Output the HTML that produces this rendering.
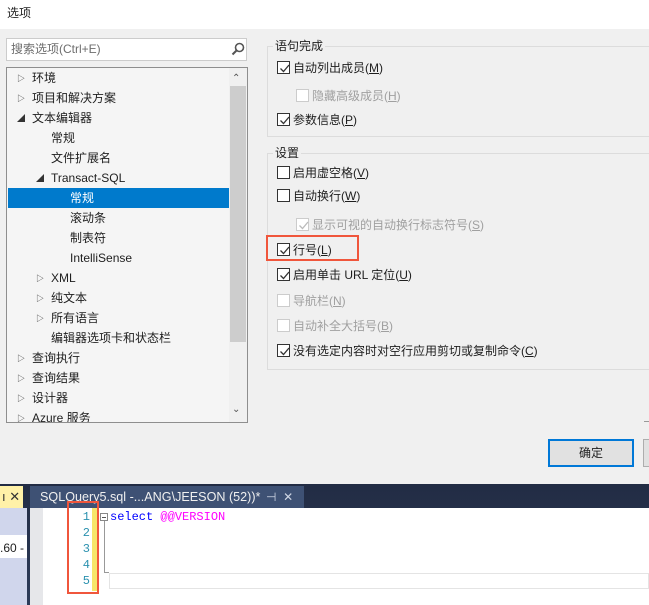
<!DOCTYPE html>
<html><head><meta charset="utf-8"><style>
*{margin:0;padding:0;box-sizing:border-box}
body{width:649px;height:605px;overflow:hidden;position:relative;background:#f0f0f0;font-family:"Liberation Sans","Noto Sans CJK SC",sans-serif;font-size:12px;color:#1e1e1e}
.a{position:absolute}
.t{position:absolute;white-space:nowrap;line-height:16px}
.cb{position:absolute;width:13px;height:13px;border:1px solid #333;background:#fff}
.cb.d{border-color:#ccc}
.cb svg{position:absolute;left:1px;top:1px}
.tri{position:absolute;font-size:8px;color:#333}
.g{position:absolute;border:1px solid #dcdcdc}
.gl{position:absolute;background:#f0f0f0;padding:0 2px;line-height:16px}
.dis{color:#a0a0a0}
</style></head><body>
<div class="a" style="left:0;top:0;width:649px;height:29px;background:#fff"></div>
<div class="t" style="left:7px;top:5px;font-size:12px">选项</div>

<div class="a" style="left:6px;top:38px;width:241px;height:23px;background:#fff;border:1px solid #ccc"></div>
<div class="t" style="left:11px;top:41px;color:#6d6d6d">搜索选项(Ctrl+E)</div>
<svg class="a" style="left:231px;top:42px" width="14" height="14" viewBox="0 0 14 14"><circle cx="8.5" cy="5.5" r="4" fill="none" stroke="#555" stroke-width="1.6"/><path d="M5.5 8.5L1.5 12.5" stroke="#555" stroke-width="2"/></svg>

<div class="a" style="left:6px;top:67px;width:242px;height:356px;background:#f5f5f5;border:1px solid #8e8e8e"></div>
<div class="a" style="left:229px;top:68px;width:18px;height:354px;background:#f0f0f0"></div>
<div class="a" style="left:230px;top:86px;width:16px;height:256px;background:#cdcdcd"></div>
<div class="t" style="left:232px;top:71px;font-size:10px;color:#555">&#8963;</div>
<div class="t" style="left:232px;top:402px;font-size:10px;color:#555">&#8964;</div>
<div class="a" style="left:8px;top:188px;width:221px;height:20px;background:#007acc"></div>

<div class="tri" style="left:17px;top:73px">&#9655;</div><div class="t" style="left:32px;top:70px">环境</div>
<div class="tri" style="left:17px;top:93px">&#9655;</div><div class="t" style="left:32px;top:90px">项目和解决方案</div>
<div class="tri" style="left:17px;top:113px">&#9698;</div><div class="t" style="left:32px;top:110px">文本编辑器</div>
<div class="t" style="left:51px;top:130px">常规</div>
<div class="t" style="left:51px;top:150px">文件扩展名</div>
<div class="tri" style="left:36px;top:173px">&#9698;</div><div class="t" style="left:51px;top:170px">Transact-SQL</div>
<div class="t" style="left:70px;top:190px;color:#fff">常规</div>
<div class="t" style="left:70px;top:210px">滚动条</div>
<div class="t" style="left:70px;top:230px">制表符</div>
<div class="t" style="left:70px;top:250px">IntelliSense</div>
<div class="tri" style="left:36px;top:273px">&#9655;</div><div class="t" style="left:51px;top:270px">XML</div>
<div class="tri" style="left:36px;top:293px">&#9655;</div><div class="t" style="left:51px;top:290px">纯文本</div>
<div class="tri" style="left:36px;top:313px">&#9655;</div><div class="t" style="left:51px;top:310px">所有语言</div>
<div class="t" style="left:51px;top:330px">编辑器选项卡和状态栏</div>
<div class="tri" style="left:17px;top:353px">&#9655;</div><div class="t" style="left:32px;top:350px">查询执行</div>
<div class="tri" style="left:17px;top:373px">&#9655;</div><div class="t" style="left:32px;top:370px">查询结果</div>
<div class="tri" style="left:17px;top:393px">&#9655;</div><div class="t" style="left:32px;top:390px">设计器</div>
<div class="a" style="left:7px;top:410px;width:222px;height:12px;overflow:hidden"><div class="tri" style="left:10px;top:3px">&#9655;</div><div class="t" style="left:25px;top:0px">Azure 服务</div></div>

<div class="g" style="left:267px;top:46px;width:390px;height:91px"></div>
<div class="gl" style="left:273px;top:38px">语句完成</div>
<div class="g" style="left:267px;top:153px;width:390px;height:217px"></div>
<div class="gl" style="left:273px;top:145px">设置</div>

<div class="cb" style="left:277px;top:61px"><svg width="11" height="11"><path d="M1.5 5.5L4.5 8.5L10 2" fill="none" stroke="#333" stroke-width="1.3"/></svg></div><div class="t" style="left:293px;top:60px">自动列出成员(<u>M</u>)</div>
<div class="cb d" style="left:296px;top:89px"></div><div class="t dis" style="left:312px;top:88px">隐藏高级成员(<u>H</u>)</div>
<div class="cb" style="left:277px;top:113px"><svg width="11" height="11"><path d="M1.5 5.5L4.5 8.5L10 2" fill="none" stroke="#333" stroke-width="1.3"/></svg></div><div class="t" style="left:293px;top:112px">参数信息(<u>P</u>)</div>

<div class="cb" style="left:277px;top:166px"></div><div class="t" style="left:293px;top:165px">启用虚空格(<u>V</u>)</div>
<div class="cb" style="left:277px;top:189px"></div><div class="t" style="left:293px;top:188px">自动换行(<u>W</u>)</div>
<div class="cb d" style="left:296px;top:218px"><svg width="11" height="11"><path d="M1.5 5.5L4.5 8.5L10 2" fill="none" stroke="#bbb" stroke-width="1.3"/></svg></div><div class="t dis" style="left:312px;top:217px">显示可视的自动换行标志符号(<u>S</u>)</div>
<div class="cb" style="left:277px;top:243px"><svg width="11" height="11"><path d="M1.5 5.5L4.5 8.5L10 2" fill="none" stroke="#333" stroke-width="1.3"/></svg></div><div class="t" style="left:293px;top:242px">行号(<u>L</u>)</div>
<div class="a" style="left:266px;top:235px;width:93px;height:26px;border:2px solid #f0563c"></div>
<div class="cb" style="left:277px;top:268px"><svg width="11" height="11"><path d="M1.5 5.5L4.5 8.5L10 2" fill="none" stroke="#333" stroke-width="1.3"/></svg></div><div class="t" style="left:293px;top:267px">启用单击 URL 定位(<u>U</u>)</div>
<div class="cb d" style="left:277px;top:294px"></div><div class="t dis" style="left:293px;top:293px">导航栏(<u>N</u>)</div>
<div class="cb d" style="left:277px;top:319px"></div><div class="t dis" style="left:293px;top:318px">自动补全大括号(<u>B</u>)</div>
<div class="cb" style="left:277px;top:344px"><svg width="11" height="11"><path d="M1.5 5.5L4.5 8.5L10 2" fill="none" stroke="#333" stroke-width="1.3"/></svg></div><div class="t" style="left:293px;top:343px">没有选定内容时对空行应用剪切或复制命令(<u>C</u>)</div>

<div class="a" style="left:644px;top:421px;width:5px;height:1px;background:#999"></div>
<div class="a" style="left:548px;top:439px;width:86px;height:28px;border:2px solid #0078d7;background:#e1e1e1;text-align:center;line-height:24px">确定</div>
<div class="a" style="left:643px;top:439px;width:10px;height:28px;border:1px solid #adadad;background:#e1e1e1"></div>

<div class="a" style="left:0;top:484px;width:649px;height:121px;background:linear-gradient(#222c44,#2c3b58)"></div>
<div class="a" style="left:0;top:486px;width:23px;height:22px;background:#fff1a8"></div>
<div class="t" style="left:2px;top:489px;font-size:13px;color:#333">ı ✕</div>
<div class="a" style="left:0;top:508px;width:27px;height:97px;background:#d0d6ec"></div>
<div class="a" style="left:0;top:535px;width:27px;height:23px;background:#fff"></div>
<div class="t" style="left:0;top:540px;color:#1e1e1e">.60 -</div>
<div class="a" style="left:30px;top:486px;width:274px;height:22px;background:#3e5174"></div>
<div class="t" style="left:40px;top:489px;font-size:12.6px;color:#f0f0f0">SQLQuery5.sql -...ANG\JEESON (52))*</div>
<div class="t" style="left:266px;top:489px;font-size:12px;color:#cfd6e4">⊣ &nbsp;✕</div>
<div class="a" style="left:30px;top:508px;width:619px;height:97px;background:#fff"></div>
<div class="a" style="left:30px;top:508px;width:13px;height:97px;background:#e6e7ea"></div>
<div class="a" style="left:92px;top:508px;width:5px;height:83px;background:#f7e66a"></div>
<div class="t" style="left:70px;top:509px;width:20px;text-align:right;font-family:'Liberation Mono',monospace;font-size:12px;line-height:16px;color:#2b91af">1<br>2<br>3<br>4<br>5</div>
<div class="a" style="left:100px;top:513px;width:8px;height:8px;border:1px solid #888;background:#fff"></div>
<div class="a" style="left:102px;top:517px;width:4px;height:1px;background:#555"></div>
<div class="a" style="left:104px;top:521px;width:1px;height:52px;background:#999"></div>
<div class="a" style="left:104px;top:572px;width:5px;height:1px;background:#999"></div>
<div class="a" style="left:109px;top:573px;width:540px;height:16px;border:1px solid #e4e4e4"></div>
<div class="t" style="left:110px;top:509px;font-family:'Liberation Mono',monospace;font-size:12px;color:#0000ff">select <span style="color:#ff00ff">@@VERSION</span></div>
<div class="a" style="left:67px;top:501px;width:32px;height:93px;border:2px solid #f0563c"></div>
</body></html>
